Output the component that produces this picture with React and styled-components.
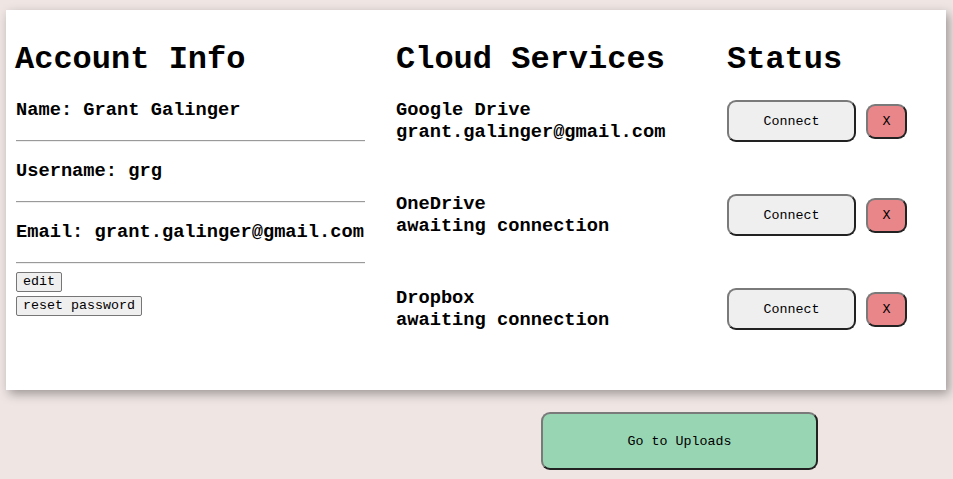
import React from "react";
import styled, { createGlobalStyle } from "styled-components";

const Global = createGlobalStyle`
  html, body { margin: 0; padding: 0; }
  body {
    background: #efe6e4;
    font-family: "Liberation Mono", "Courier New", monospace;
    color: #000;
  }
`;

const Page = styled.div`
  width: 953px;
  height: 479px;
  padding: 10px 7px 0 6px;
  box-sizing: border-box;
  overflow: hidden;
`;

const Card = styled.div`
  background: #fff;
  height: 380px;
  box-sizing: border-box;
  padding: 32px 0 0 9px;
  display: flex;
  box-shadow: 3px 4px 10px rgba(0, 0, 0, 0.35);
`;

const Heading = styled.h1`
  margin: 0;
  font-size: 32px;
  line-height: 36px;
  font-weight: bold;
  white-space: nowrap;
`;

const AccountCol = styled.div`
  width: 350px;
  display: flex;
  flex-direction: column;
`;

const InfoLine = styled.div`
  font-size: 18.72px;
  line-height: 22px;
  font-weight: bold;
  margin: ${(p) => (p.$first ? "21px" : "18px")} 0 19px 1px;
  white-space: nowrap;
`;

const Rule = styled.hr`
  margin: 0 0 0 1px;
  height: 0;
  border: none;
  border-top: 1px solid #9a9a9a;
  border-bottom: 1px solid #eeeeee;
`;

const Actions = styled.div`
  display: flex;
  flex-direction: column;
  align-items: flex-start;
  gap: 4px;
  margin: 8px 0 0 1px;
`;

const SmallButton = styled.button`
  font-family: "Liberation Mono", "Courier New", monospace;
  font-size: 13.33px;
  height: 20px;
  padding: 0 6px;
  line-height: 18px;
  background: #efefef;
  border: 1px solid #767676;
  border-radius: 2px;
  color: #000;
`;

const ServicesGrid = styled.div`
  margin-left: 31px;
  display: grid;
  grid-template-columns: 331px auto;
  grid-auto-rows: auto;
  row-gap: 50px;
  align-items: center;
  align-content: start;
`;

const HeaderCell = styled(Heading)`
  margin-bottom: -29px;
`;

const ServiceText = styled.div`
  font-size: 18.72px;
  line-height: 22px;
  font-weight: bold;
  white-space: nowrap;
`;

const StatusCell = styled.div`
  display: flex;
  align-items: center;
  gap: 10px;
`;

const RoundButton = styled.button`
  font-family: "Liberation Mono", "Courier New", monospace;
  font-size: 13.33px;
  color: #000;
  background: ${(p) => p.$bg};
  width: ${(p) => p.$w}px;
  height: ${(p) => p.$h}px;
  border-style: solid;
  border-width: 2px;
  border-color: #7a7a7a #222 #222 #7a7a7a;
  border-radius: 9px;
  padding: 0;
`;

const Footer = styled.div`
  padding: 22px 0 0 535px;
`;

const services = [
  { name: "Google Drive", status: "grant.galinger@gmail.com" },
  { name: "OneDrive", status: "awaiting connection" },
  { name: "Dropbox", status: "awaiting connection" },
];

export default function App() {
  return (
    <>
      <Global />
      <Page>
        <Card>
          <AccountCol>
            <Heading>Account Info</Heading>
            <InfoLine $first>Name: Grant Galinger</InfoLine>
            <Rule />
            <InfoLine>Username: grg</InfoLine>
            <Rule />
            <InfoLine>Email: grant.galinger@gmail.com</InfoLine>
            <Rule />
            <Actions>
              <SmallButton>edit</SmallButton>
              <SmallButton>reset password</SmallButton>
            </Actions>
          </AccountCol>
          <ServicesGrid>
            <HeaderCell>Cloud Services</HeaderCell>
            <HeaderCell>Status</HeaderCell>
            {services.map((s) => (
              <React.Fragment key={s.name}>
                <ServiceText>
                  {s.name}
                  <br />
                  {s.status}
                </ServiceText>
                <StatusCell>
                  <RoundButton $bg="#efefef" $w={129} $h={42}>
                    Connect
                  </RoundButton>
                  <RoundButton $bg="#e8868a" $w={41} $h={35}>
                    X
                  </RoundButton>
                </StatusCell>
              </React.Fragment>
            ))}
          </ServicesGrid>
        </Card>
        <Footer>
          <RoundButton $bg="#98d5b3" $w={277} $h={58}>
            Go to Uploads
          </RoundButton>
        </Footer>
      </Page>
    </>
  );
}
